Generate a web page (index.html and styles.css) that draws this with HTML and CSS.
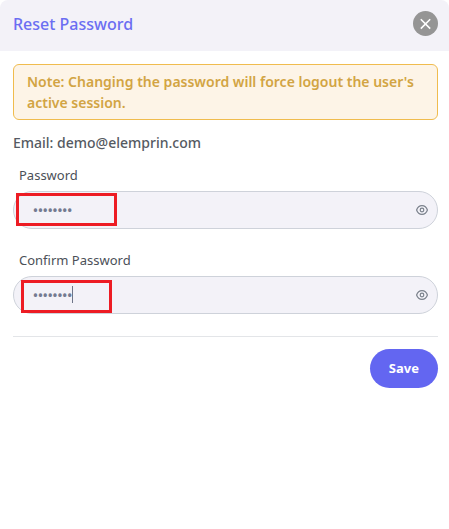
FILE: index.html
```html
<!DOCTYPE html>
<html lang="en">
<head>
<meta charset="utf-8">
<meta name="viewport" content="width=device-width, initial-scale=1">
<title>Reset Password</title>
<link rel="stylesheet" href="styles.css">
</head>
<body>
<main class="modal">
  <header class="modal-header">
    <h1 class="title">Reset Password</h1>
    <button class="close" type="button" aria-label="Close">
      <svg width="25" height="25" viewBox="0 0 25 25" fill="none" stroke="#fff" stroke-width="1.6"><path d="M7.800 8.200l9.400 9.400M17.200 8.200l-9.400 9.400"/></svg>
    </button>
  </header>
  <form class="modal-body">
    <p class="note">Note: Changing the password will force logout the user's active session.</p>
    <p class="email">Email: demo@elemprin.com</p>
    <div class="field">
      <label class="label" for="password">Password</label>
      <div class="control">
        <input class="input" id="password" type="password" value="password">
        <button class="reveal" type="button" aria-label="Show password">
          <svg width="12" height="12" viewBox="0 0 12 12" fill="none" stroke="#7b828c" stroke-width="1.2"><path d="M.6 6C1.600 3 3.800 1.700 6 1.700S10.400 3 11.400 6C10.400 9 8.200 10.300 6 10.300S1.600 9 .6 6z"/><circle cx="6" cy="6" r="1.800"/></svg>
        </button>
        <span class="mark mark-password"></span>
      </div>
    </div>
    <div class="field">
      <label class="label" for="confirm">Confirm Password</label>
      <div class="control">
        <input class="input" id="confirm" type="password" value="password">
        <button class="reveal" type="button" aria-label="Show confirmation">
          <svg width="12" height="12" viewBox="0 0 12 12" fill="none" stroke="#7b828c" stroke-width="1.2"><path d="M.6 6C1.600 3 3.800 1.700 6 1.700S10.400 3 11.400 6C10.400 9 8.200 10.300 6 10.300S1.600 9 .6 6z"/><circle cx="6" cy="6" r="1.800"/></svg>
        </button>
        <span class="caret"></span>
        <span class="mark mark-confirm"></span>
      </div>
    </div>
    <footer class="actions">
      <button class="save" type="submit">Save</button>
    </footer>
  </form>
</main>
</body>
</html>
```

FILE: styles.css
```css
* { box-sizing: border-box; }
body {
  margin: 0;
  background: #fff;
  color: #555a62;
  font-family: "Noto Sans", "Open Sans", sans-serif;
  font-size: 14px;
  line-height: 21px;
}
h1, p { margin: 0; }
button { border: 0; padding: 0; font: inherit; cursor: pointer; }
.modal-header {
  display: flex;
  align-items: center;
  justify-content: space-between;
  padding: 11px 11px 15px 13px;
  background: #f3f2f8;
  border-radius: 8px 8px 0 0;
}
.title { padding-top: 1px; color: #6b6ef2; font-size: 16px; font-weight: 500; line-height: 24px; }
.close {
  display: block;
  width: 25px;
  height: 25px;
  border-radius: 50%;
  background: #959595;
}
.close svg, .reveal svg { display: block; }
.modal-body { padding: 13px 11px 13px 13px; }
.note {
  padding: 6px 13px;
  border: 1px solid #f0bc4e;
  border-radius: 6px;
  background: #fdf4e7;
  color: #d2a443;
  font-weight: 600;
}
.email { margin-top: 12px; font-weight: 500; }
.field { margin-top: 12px; }
.field + .field { margin-top: 21px; }
.label { display: block; padding: 0 6px 6px; color: #4b5058; font-size: 13px; line-height: 20px; }
.control { position: relative; }
.input {
  display: block;
  width: 100%;
  height: 38px;
  padding: 0 36px 0 19px;
  border: 1px solid #ced2da;
  border-radius: 19px;
  background: #f3f2f8;
  color: #747b91;
  font: 600 13px "Noto Sans", sans-serif;
  outline: 0;
}
.reveal { position: absolute; top: 13px; right: 10px; background: none; }
.mark { position: absolute; height: 33px; border: 3px solid #ed1c24; pointer-events: none; }
.mark-password { top: 2px; left: 3px; width: 101px; }
.mark-confirm { top: 4px; left: 8px; width: 91px; }
.caret { position: absolute; top: 10px; left: 59px; width: 1px; height: 17px; background: #6e7588; }
.actions {
  display: flex;
  justify-content: flex-end;
  margin-top: 22px;
  padding-top: 12px;
  border-top: 1px solid #e3e5e8;
}
.save {
  padding: 9px 19px;
  border-radius: 20px;
  background: #6366f1;
  color: #fff;
  font-size: 13px;
  font-weight: 700;
}
```
